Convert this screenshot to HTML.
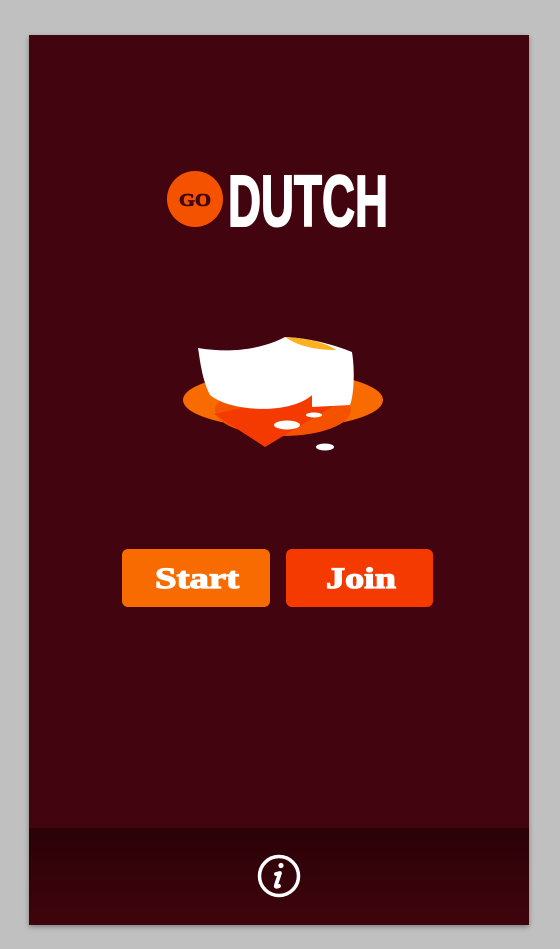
<!DOCTYPE html>
<html><head><meta charset="utf-8"><style>
html,body{margin:0;padding:0}
body{width:560px;height:949px;background:#c0c0c0;position:relative;overflow:hidden;font-family:"Liberation Sans",sans-serif}
.card{position:absolute;left:29px;top:35px;width:500px;height:890px;background:#42040e;box-shadow:0 2px 5px rgba(0,0,0,.35)}
.foot{position:absolute;left:0;top:793px;width:500px;height:97px;background:linear-gradient(#2a0207,#3f040d)}
.btn{position:absolute;top:514px;height:58px;width:148px;border-radius:6px}
</style></head><body>
<div class="card">
<svg width="500" height="890" style="position:absolute;left:0;top:0" viewBox="29 35 500 890">
<circle cx="195" cy="199" r="28" fill="#f55200"/>
<text x="195" y="206" text-anchor="middle" font-family="Liberation Serif,serif" font-weight="bold" font-size="18" fill="#42040e" stroke="#42040e" stroke-width="0.8" textLength="32" lengthAdjust="spacingAndGlyphs">GO</text>
<text x="228" y="226" font-family="Liberation Sans,sans-serif" font-weight="bold" font-size="72" fill="#fff" stroke="#fff" stroke-width="2" textLength="160" lengthAdjust="spacingAndGlyphs">DUTCH</text>
<ellipse cx="283" cy="400" rx="100" ry="28" fill="#f76b00"/>
<ellipse cx="283" cy="410" rx="68" ry="26" fill="#f55200"/>
<polygon points="214,414 265,447 340,402 300,395" fill="#f53a00"/>
<path d="M198,348 C240,355 270,345 285,337 C310,338 335,345 352,352 C355,370 354,395 350,405 L312,407 L312,395 C290,415 230,412 210,395 C202,380 200,360 198,348 Z" fill="#fff"/>
<path d="M285,337 C305,338 325,342 336,350 C315,350 298,346 285,337Z" fill="#fbb01f"/>
<ellipse cx="287" cy="425" rx="13" ry="4.5" fill="#fff"/>
<ellipse cx="314" cy="415" rx="8" ry="2.5" fill="#fff"/>
<ellipse cx="325" cy="447" rx="9" ry="3.5" fill="#fff"/>
<rect x="122" y="549" width="148" height="58" rx="6" fill="#f76b00"/>
<rect x="286" y="549" width="147" height="58" rx="6" fill="#f53a00"/>
<text x="197" y="588" text-anchor="middle" font-family="Liberation Serif,serif" font-weight="bold" font-size="30" fill="#fff" stroke="#fff" stroke-width="1.2" textLength="84" lengthAdjust="spacingAndGlyphs">Start</text>
<text x="361" y="588" text-anchor="middle" font-family="Liberation Serif,serif" font-weight="bold" font-size="30" fill="#fff" stroke="#fff" stroke-width="1.2" textLength="70" lengthAdjust="spacingAndGlyphs">Join</text>
</svg>
<div class="foot">
<svg width="500" height="97" viewBox="0 0 500 97" style="position:absolute;left:0;top:0">
<circle cx="250" cy="48" r="19.5" fill="none" stroke="#fff" stroke-width="3.5"/>
<circle cx="252" cy="37.5" r="2.6" fill="#fff"/>
<path d="M247,46 L251,45 L247,57 Q246,60 250,58" fill="none" stroke="#fff" stroke-width="3.8" stroke-linecap="round" stroke-linejoin="round"/>
</svg>
</div>
</div>
</body></html>
